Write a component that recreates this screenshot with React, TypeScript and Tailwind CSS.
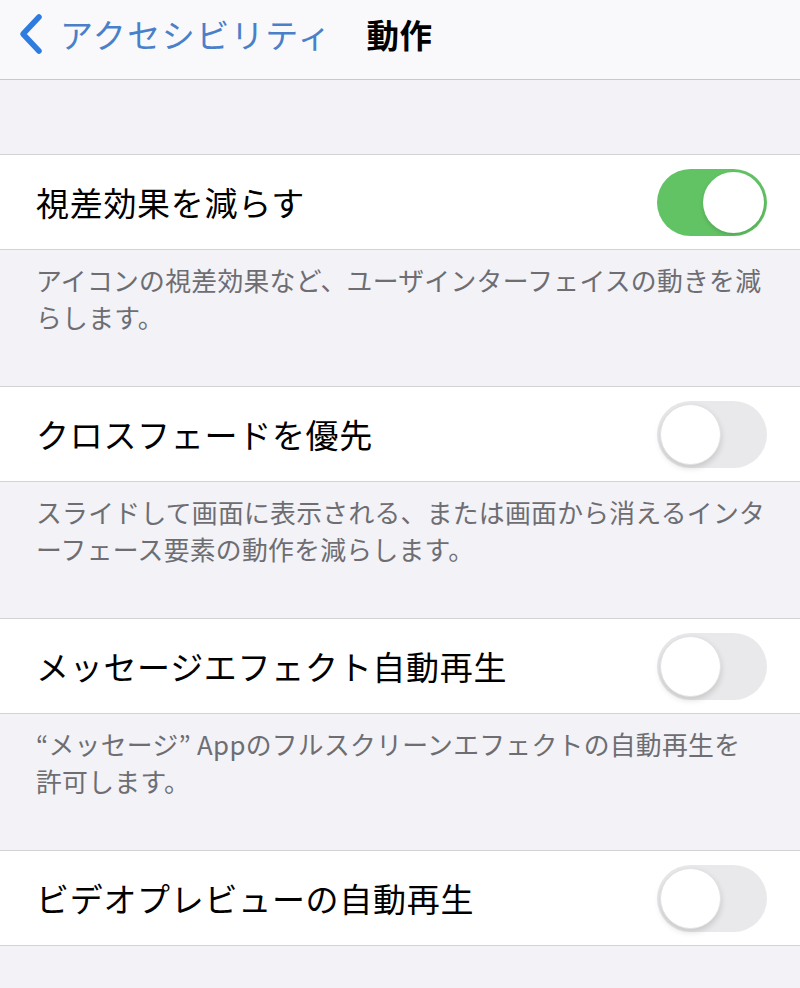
import React from "react";

const font = { fontFamily: '"Noto Sans CJK JP", "Noto Sans", sans-serif' };

function Toggle({ on }: { on: boolean }) {
  return on ? (
    <div className="w-[110px] h-[67px] rounded-full bg-[#62c364] flex items-center justify-end pr-[3px] shrink-0">
      <div className="w-[61px] h-[61px] rounded-full bg-white shadow-[0_2px_4px_rgba(0,0,0,0.15)]" />
    </div>
  ) : (
    <div className="w-[110px] h-[67px] rounded-full bg-[#e9e9eb] flex items-center justify-start pl-[3px] shrink-0">
      <div className="w-[61px] h-[61px] rounded-full bg-white border border-[#e2e2e4] shadow-[0_3px_6px_rgba(0,0,0,0.15)]" />
    </div>
  );
}

function Row({ label, on }: { label: string; on: boolean }) {
  return (
    <div className="h-[96px] bg-white border-y border-[#d3d3d6] flex items-center justify-between pl-[36px] pr-[33px]">
      <span className="text-[33px] leading-none text-black tracking-[0.7px]">{label}</span>
      <Toggle on={on} />
    </div>
  );
}

function Footer({ lines }: { lines: string[] }) {
  return (
    <div className="h-[136px] pt-[11px] px-[36px] text-[25.8px] leading-[37px] tracking-[0.3px] text-[#6d6d72]">
      {lines.map((l, i) => (
        <div key={i} className="whitespace-nowrap">{l}</div>
      ))}
    </div>
  );
}

export default function App() {
  return (
    <div style={font} className="w-[800px] h-[988px] bg-[#f2f2f7] overflow-hidden">
      <div className="h-[80px] bg-[#f9f9fb] border-b border-[#c9c9cc] flex items-start pt-[13px] pl-[18px]">
        <svg width="26" height="42" viewBox="0 0 26 42" className="shrink-0">
          <path d="M21 4 L5 21 L21 38" fill="none" stroke="#2f7ce0" strokeWidth="5.5" strokeLinecap="round" strokeLinejoin="round" />
        </svg>
        <span className="ml-[16px] text-[33px] leading-[42px] tracking-[1.5px] text-[#4a80c9]">アクセシビリティ</span>
        <span className="ml-[34px] text-[32.5px] leading-[42px] tracking-[0.5px] font-bold text-black">動作</span>
      </div>
      <div className="h-[74px]" />
      <Row label="視差効果を減らす" on={true} />
      <Footer lines={["アイコンの視差効果など、ユーザインターフェイスの動きを減", "らします。"]} />
      <Row label="クロスフェードを優先" on={false} />
      <Footer lines={["スライドして画面に表示される、または画面から消えるインタ", "ーフェース要素の動作を減らします。"]} />
      <Row label="メッセージエフェクト自動再生" on={false} />
      <Footer lines={["\u201Cメッセージ\u201D Appのフルスクリーンエフェクトの自動再生を", "許可します。"]} />
      <Row label="ビデオプレビューの自動再生" on={false} />
    </div>
  );
}
